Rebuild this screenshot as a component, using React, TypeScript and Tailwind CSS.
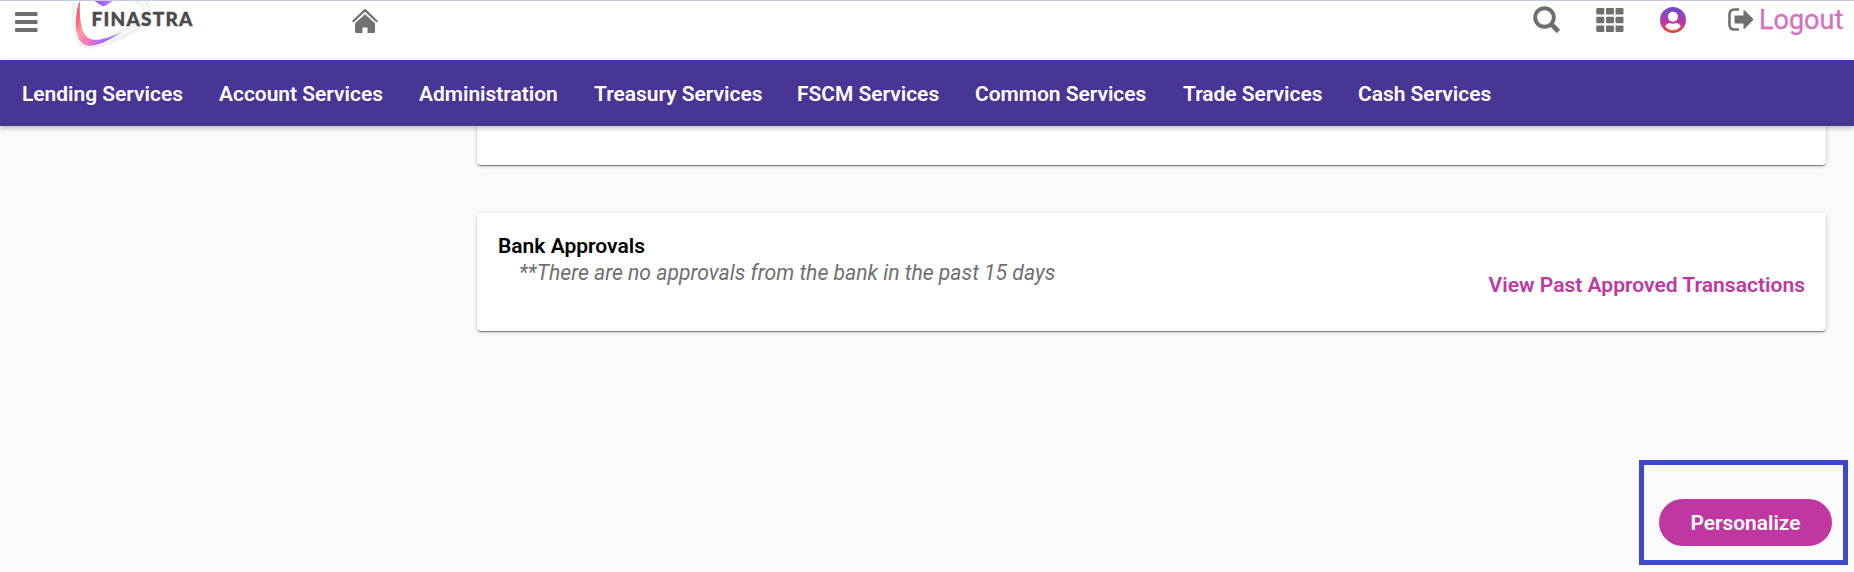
import React from "react";

const services = [
  { label: "Lending Services", width: "w-[161px]" },
  { label: "Account Services", width: "w-[164px]" },
  { label: "Administration", width: "w-[139px]" },
  { label: "Treasury Services", width: "w-[167px]" },
  { label: "FSCM Services", width: "w-[142px]" },
  { label: "Common Services", width: "w-[172px]" },
  { label: "Trade Services", width: "w-[139px]" },
  { label: "Cash Services", width: "w-[134px]" },
];

function MenuIcon() {
  return (
    <svg width="23" height="20" viewBox="0 0 23 20" fill="#6f6f6f">
      <rect width="22.500" height="4" rx="1.2" />
      <rect y="8" width="22.500" height="4" rx="1.2" />
      <rect y="16" width="22.500" height="4" rx="1.2" />
    </svg>
  );
}

function LogoMark() {
  return (
    <svg width="84" height="48" viewBox="0 0 84 48" className="col-start-1 row-start-1">
      <defs>
        <linearGradient id="swoosh" gradientUnits="userSpaceOnUse" x1="6" y1="0" x2="50" y2="30">
          <stop offset="0" stopColor="#f9305c" />
          <stop offset="0.2" stopColor="#fb5e78" />
          <stop offset="0.4" stopColor="#ff9aa0" />
          <stop offset="0.6" stopColor="#f877bd" />
          <stop offset="0.85" stopColor="#9c6cf5" />
          <stop offset="1" stopColor="#8a7bf5" />
        </linearGradient>
        <linearGradient id="gem" x1="0" y1="0" x2="1" y2="0">
          <stop offset="0" stopColor="#8b5cf0" />
          <stop offset="0.6" stopColor="#a46cf0" />
          <stop offset="1" stopColor="#d98be0" />
        </linearGradient>
        <filter id="soft" x="-10%" y="-10%" width="120%" height="120%">
          <feGaussianBlur stdDeviation="0.9" />
        </filter>
      </defs>
      <path d="M4 0C2 12 4 30 8 40C12 48 26 47 38 42C55 35 73 27 78 17C81 8 78 4 76 0" fill="none" stroke="#e2e2e2" strokeWidth="1.8" filter="url(#soft)" />
      <path d="M65 0C74 3 77 10 72 17C66 24 52 31 40 35" fill="none" stroke="#eaeaea" strokeWidth="2.4" filter="url(#soft)" />
      <path d="M9 1C6 12 4.500 25 7.500 34C9.500 42 15 45.500 23 44.500C32 43 41 38 52 31C40 36.500 29 40 22 38.500C13 36.500 9 24 9.800 1Z" fill="url(#swoosh)" />
      <path d="M24.500 0H43L36 4.300Q33.500 6 31 4.300Z" fill="url(#gem)" />
    </svg>
  );
}

function Logo() {
  return (
    <div className="ml-[32px] grid h-[59px] w-[126px]">
      <LogoMark />
      <span className="col-start-1 row-start-1 pt-[6px] pl-[22px] font-[Lato] text-[19px] leading-6 font-black tracking-[1.250px] whitespace-nowrap text-[#4b4a4c] [-webkit-text-stroke:0.400px_#4b4a4c]">
        FINASTRA
      </span>
    </div>
  );
}

function HomeIcon() {
  return (
    <svg width="26" height="25" viewBox="0 0 26 25" className="mt-[7px] ml-[156px]">
      <path d="M1.500 13L13 2.200L24.500 13" fill="none" stroke="#727272" strokeWidth="2.400" strokeLinejoin="round" strokeLinecap="round" />
      <path d="M13 6.300L23 15.200V23.500Q23 25 21.500 25H15.500V19.500H10.500V25H4.500Q3 25 3 23.500V15.200Z" fill="#727272" />
    </svg>
  );
}

function SearchIcon() {
  return (
    <svg width="28" height="28" viewBox="0 0 28 28" fill="none" stroke="#6f6f6f">
      <circle cx="11.500" cy="11.500" r="9.300" strokeWidth="3.900" />
      <path d="M18 18L25.500 25.500" strokeWidth="4.600" />
    </svg>
  );
}

function AppsIcon() {
  return (
    <svg width="28" height="24" viewBox="0 0 28 24" fill="#6f6f6f">
      {[0, 8.7, 17.4].map((y) =>
        [0.3, 10, 19.5].map((x) => <rect key={`${x}-${y}`} x={x} y={y} width="8" height="6.600" rx="1" />)
      )}
    </svg>
  );
}

function ProfileIcon() {
  return (
    <svg width="26" height="26" viewBox="0 0 26 26">
      <defs>
        <linearGradient id="profile" x1="0" y1="0" x2="0" y2="1">
          <stop offset="0" stopColor="#694ed6" />
          <stop offset="0.62" stopColor="#c137a2" />
          <stop offset="0.9" stopColor="#e9453f" />
          <stop offset="1" stopColor="#ec4934" />
        </linearGradient>
      </defs>
      <circle cx="13" cy="13" r="13" fill="url(#profile)" />
      <circle cx="13" cy="9.700" r="5" fill="white" />
      <path d="M5.200 19.300C6.500 17 8.500 16 10 16Q13 17.500 16 16C17.500 16 19.500 17 20.800 19.300C19 22 16 23.300 13 23.300C10 23.300 7 22 5.200 19.300Z" fill="white" />
    </svg>
  );
}

function LogoutIcon() {
  return (
    <svg width="26" height="23" viewBox="0 0 26 23">
      <path d="M11 1.500H6.500Q1.500 1.500 1.500 6.500V16.500Q1.500 21.500 6.500 21.500H11" fill="none" stroke="#6f6f6f" strokeWidth="2.600" />
      <path d="M7 7.500H15.500V2.800Q15.500 1.200 16.800 2.400L25 10.700Q25.600 11.500 25 12.300L16.800 20.600Q15.500 21.800 15.500 20.200V15.500H7Q6.500 15.500 6.500 15V8Q6.500 7.500 7 7.500Z" fill="#6f6f6f" />
    </svg>
  );
}

export default function App() {
  return (
    <div className="flex h-[572px] w-[1854px] flex-col overflow-hidden bg-[#fafafa] font-[Roboto,sans-serif]">
      <header className="flex h-[60px] shrink-0 items-start border-t border-[#c1cce2] bg-white pl-[14.500px]">
        <button className="mt-[11px]" aria-label="Menu">
          <MenuIcon />
        </button>
        <Logo />
        <HomeIcon />
        <div className="mr-[10px] ml-auto flex items-start">
          <div className="mt-[5px] mr-[35px]"><SearchIcon /></div>
          <div className="mt-[7px] mr-[36px]"><AppsIcon /></div>
          <div className="mt-[6px] mr-[42px]"><ProfileIcon /></div>
          <a className="flex items-start" href="#logout">
            <span className="mt-[7px] mr-[5px]"><LogoutIcon /></span>
            <span className="w-[85px] pt-px text-[27px] leading-[37px] whitespace-nowrap text-[#d571bf] [-webkit-text-stroke:0.300px_#d571bf]">Logout</span>
          </a>
        </div>
      </header>
      <nav className="relative z-10 flex h-[66px] shrink-0 items-center gap-[36px] bg-[#493593] pt-[2px] pl-[22px] shadow-[0_2px_5px_rgba(0,0,0,0.26)]">
        {services.map((service) => (
          <a key={service.label} href="#services" className={`${service.width} text-[20.950px] leading-6 font-semibold whitespace-nowrap text-white`}>
            {service.label}
          </a>
        ))}
      </nav>
      <main className="flex flex-1 flex-col pr-[28px] pl-[477px]">
        <section className="-mt-1 h-[43px] shrink-0 rounded-b-[4px] bg-white shadow-[0_2px_1px_-1px_rgba(0,0,0,0.3),0_1px_1px_rgba(0,0,0,0.2),0_1px_4px_rgba(0,0,0,0.2)]" />
        <section className="mt-12 flex h-[118px] shrink-0 items-start justify-between rounded-[4px] bg-white pr-[21px] pl-[21px] shadow-[0_2px_1px_-1px_rgba(0,0,0,0.3),0_1px_1px_rgba(0,0,0,0.2),0_1px_4px_rgba(0,0,0,0.2)]">
          <div className="pt-5 text-[21px] leading-[26px]">
            <h2 className="text-[21px] font-semibold text-black">Bank Approvals</h2>
            <p className="pt-px pl-[21px] text-[21.180px] text-[#6f6f6f] italic">**There are no approvals from the bank in the past 15 days</p>
          </div>
          <a href="#approved" className="pt-[59px] text-[21.050px] leading-[26px] font-semibold whitespace-nowrap text-[#c137a2]">
            View Past Approved Transactions
          </a>
        </section>
        <div className="mt-auto -mr-[22px] mb-[7px] flex h-[105px] w-[209px] items-start justify-end self-end border-[5px] border-[#3f48cc] pt-[34px] pr-[11px]">
          <button className="h-[47px] w-[173px] rounded-full bg-[#c137a2] pt-[2px] text-[20.900px] font-semibold text-white">Personalize</button>
        </div>
      </main>
    </div>
  );
}
